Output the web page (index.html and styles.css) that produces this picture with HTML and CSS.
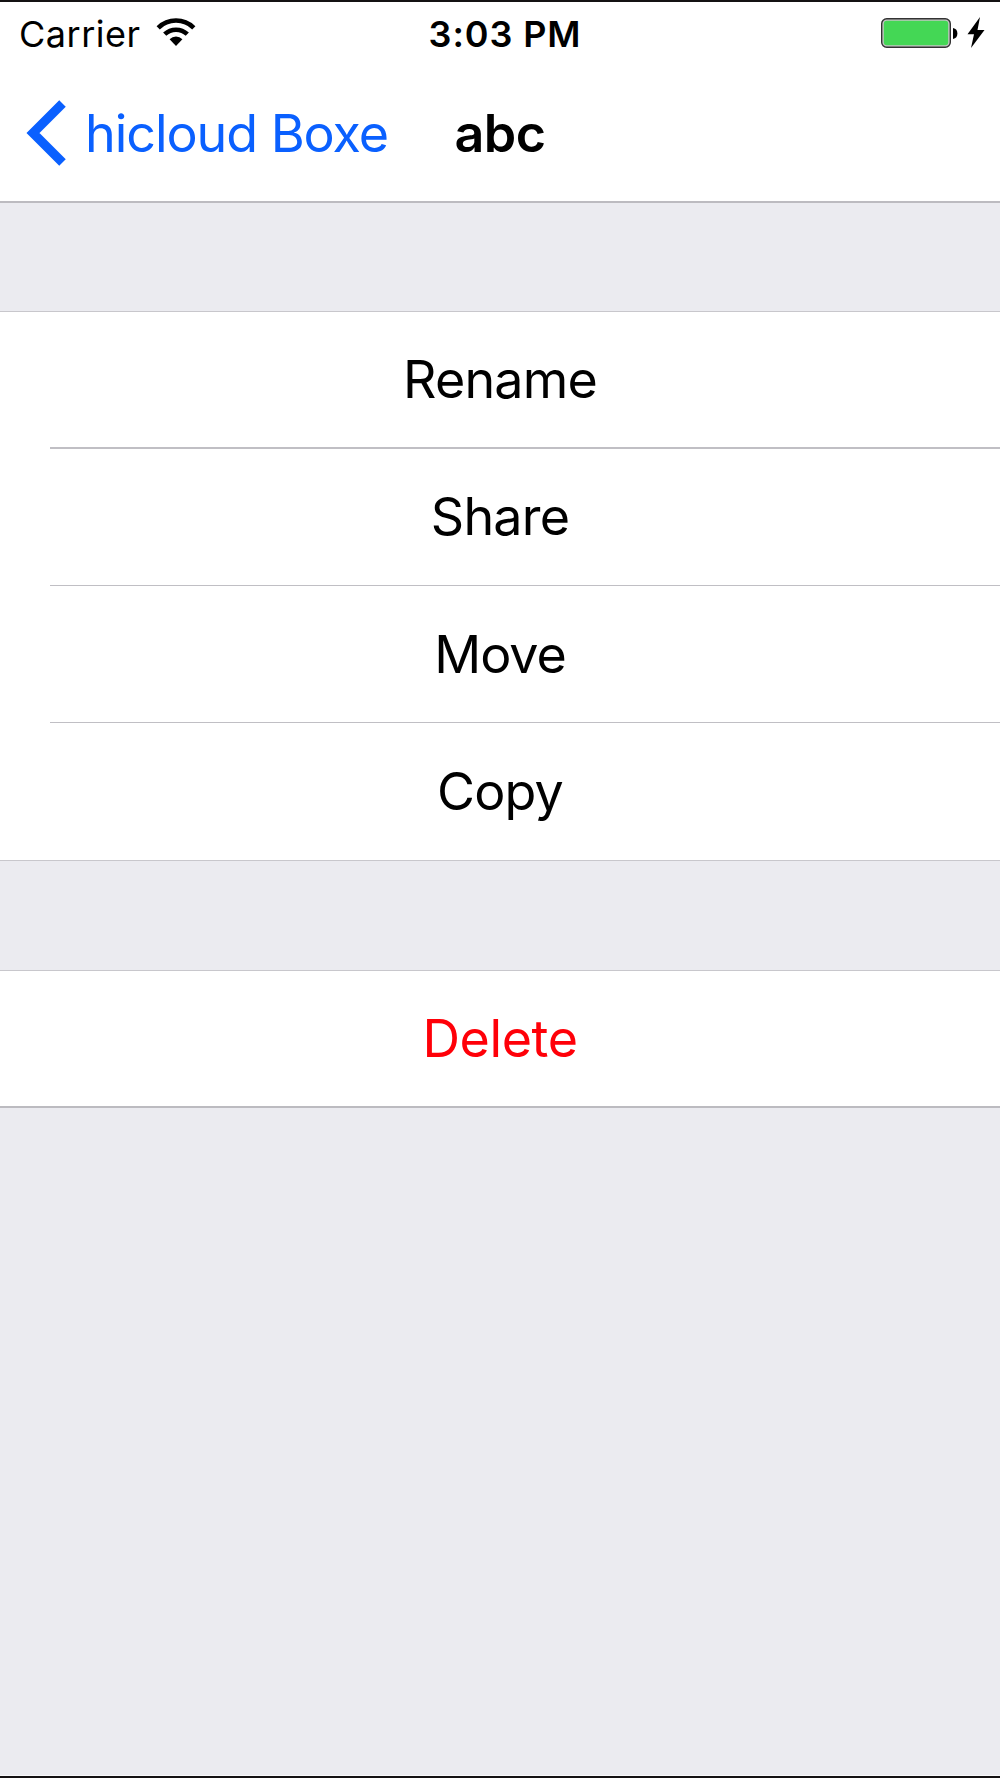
FILE: index.html
```
<!DOCTYPE html>
<html lang="en">
  <head>
    <meta charset="utf-8">
    <title>abc</title>
    <link rel="stylesheet" href="styles.css">
  </head>
  <body>
    <div class="screen">
      <header class="header">
        <div class="status">
          <div class="status-left">
            <span class="carrier">Carrier</span>
            <svg class="wifi" width="40" height="30" viewBox="0 0 40 30">
              <path d="M2.2 9.8A25.5 25.5 0 0 1 37.8 9.8" fill="none" stroke="#000" stroke-width="4.6"/>
              <path d="M8.7 16.2A16.4 16.4 0 0 1 31.3 16.2" fill="none" stroke="#000" stroke-width="4.6"/>
              <path d="M13.6 21.2A9.2 9.2 0 0 1 26.4 21.2L20 28Z"/>
            </svg>
          </div>
          <span class="time">3:03 PM</span>
          <div class="status-right">
            <svg class="battery" width="105" height="32" viewBox="0 0 105 32">
              <rect x="1.7" y="1.7" width="68.6" height="28.6" rx="5" fill="#c4c4c4" stroke="#333" stroke-width="1.4"/>
              <rect x="3.8" y="3.8" width="64.4" height="24.4" rx="3" fill="#44d755"/>
              <path d="M73 11C76 11.5 77.4 13.5 77.4 16.5S76 21.5 73 22Z"/>
              <path d="M100 0L87.5 17.3H94L91 31L104.5 13H97.5Z"/>
            </svg>
          </div>
        </div>
        <nav class="nav">
          <a class="back">
            <svg class="chevron" width="42" height="66" viewBox="0 0 42 66">
              <path d="M37.5 3.5L8 33L37.5 62.5" fill="none" stroke="#0a60ff" stroke-width="9.2"/>
            </svg>
            <span class="back-text">hicloud Boxe</span>
          </a>
          <h1 class="title">abc</h1>
        </nav>
      </header>

      <ul class="list">
        <li class="item">Rename</li>
        <li class="item">Share</li>
        <li class="item">Move</li>
        <li class="item">Copy</li>
      </ul>

      <ul class="list list-danger">
        <li class="item">Delete</li>
      </ul>
    </div>
  </body>
</html>
```
FILE: styles.css
```
* {
  box-sizing: border-box;
}

body {
  margin: 0;
  font-family: Inter, "Liberation Sans", sans-serif;
  color: #000;
  background-color: #ebebf0;
}

.screen {
  height: 1778px;
  border-top: 2px solid #141213;
  border-bottom: 2px solid #141213;
  box-shadow: inset 0 -1px 0 #f8f8fa;
  overflow: hidden;
}

.header {
  height: 201px;
  background-color: #fff;
  border-bottom: 2px solid #bcbbc0;
}

.status {
  display: grid;
  grid-template-columns: 1fr auto 1fr;
  align-items: center;
  height: 64px;
  padding: 0 9px 0 19px;
  font-size: 36px;
}

.status-left,
.status-right {
  display: flex;
  align-items: center;
}

.status-left {
  gap: 15px;
}

.status-right {
  justify-content: flex-end;
  padding-right: 6px;
}

.wifi,
.battery {
  margin-bottom: 2px;
}

.carrier {
  letter-spacing: 0.5px;
}

.time {
  font-weight: 600;
  letter-spacing: 0.9px;
}

.nav {
  display: grid;
  grid-template-columns: 1fr auto 1fr;
  align-items: center;
  height: 134px;
  padding: 0 25px;
  font-size: 52px;
}

.back {
  display: flex;
  align-items: center;
  gap: 18px;
  color: #0a60ff;
  letter-spacing: -1.05px;
  white-space: nowrap;
}

.title {
  margin: 0;
  font-size: 52px;
  font-weight: 600;
  letter-spacing: -0.6px;
}

.list {
  margin: 108px 0 0;
  padding: 0;
  list-style: none;
  background-color: #fff;
  border-top: 1px solid #c8c7cc;
  border-bottom: 1px solid #c8c7cc;
}

.item {
  display: flex;
  align-items: center;
  justify-content: center;
  height: 135px;
  font-size: 52px;
  letter-spacing: -0.8px;
}

/* separators start 50px in from the left */
.item + .item {
  height: 138px;
  padding-top: 1px;
  background: linear-gradient(#c0bfc4, #c0bfc4) 50px 0 / 950px 1px no-repeat;
}

.item:nth-child(2) {
  background-size: 950px 2px;
}

.item:nth-child(3) {
  height: 137px;
  letter-spacing: -1.1px;
}

.list-danger {
  margin-top: 109px;
  border-bottom: 2px solid #bcbbc0;
}

.list-danger .item {
  color: #ff0008;
  letter-spacing: -0.4px;
}
```
